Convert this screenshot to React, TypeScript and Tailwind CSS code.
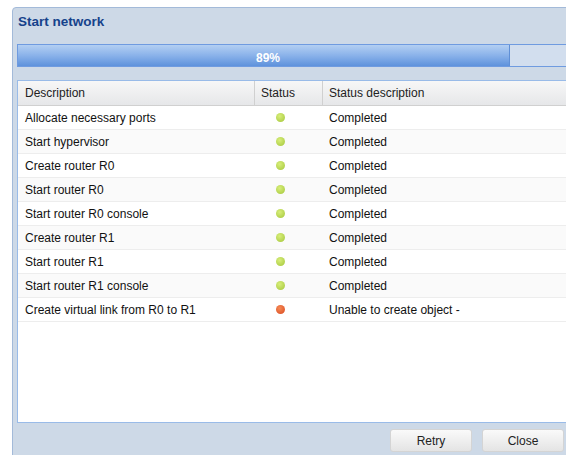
import React from "react";

type Step = { name: string; ok: boolean; status: string };

const steps: Step[] = [
  { name: "Allocate necessary ports", ok: true, status: "Completed" },
  { name: "Start hypervisor", ok: true, status: "Completed" },
  { name: "Create router R0", ok: true, status: "Completed" },
  { name: "Start router R0", ok: true, status: "Completed" },
  { name: "Start router R0 console", ok: true, status: "Completed" },
  { name: "Create router R1", ok: true, status: "Completed" },
  { name: "Start router R1", ok: true, status: "Completed" },
  { name: "Start router R1 console", ok: true, status: "Completed" },
  { name: "Create virtual link from R0 to R1", ok: false, status: "Unable to create object -" },
];

const font = { fontFamily: '"Liberation Sans", Arial, sans-serif' };

function Button({ label }: { label: string }) {
  return (
    <button className="w-[82px] h-[23px] rounded-[3px] border border-[#d4d4d4] bg-gradient-to-b from-[#fafafa] to-[#e4e4e4] text-[12px] text-[#222]">
      {label}
    </button>
  );
}

export default function App() {
  const progress = 89;

  return (
    <div className="w-[566px] h-[455px] bg-white overflow-hidden pl-[12px] pt-[7px]" style={font}>
      <div className="w-[562px] h-[460px] rounded-tl-[4px] border border-[#a3bad9] bg-[#cdd9e7] pl-[4px] pr-[4px] flex flex-col">
        <div className="h-[29px] flex items-center pl-[1px] text-[13.5px] font-bold text-[#15428b]">Start network</div>

        {/* progress bar */}
        <div className="mt-[7px] h-[23px] border border-[#6f9be0] bg-[#d2deee] flex">
          <div
            className="h-full bg-gradient-to-b from-[#b3cff2] via-[#8ab2ea] to-[#5e92dc] border-r border-[#5f8fd6]"
            style={{ width: "492px" }}
          />
          <span className="absolute left-[256px] top-[49px] text-[12px] font-bold text-white">{progress}%</span>
        </div>

        {/* steps grid */}
        <div className="mt-[13px] h-[343px] border border-[#99bbe8] bg-white flex flex-col">
          <div className="h-[25px] flex items-stretch bg-gradient-to-b from-[#f7f7f7] to-[#e6e7e9] border-b border-[#d0d0d0] text-[12px] text-[#222]">
            <div className="w-[237px] pl-[7px] flex items-center border-r border-[#d0d0d0]">Description</div>
            <div className="w-[68px] pl-[6px] flex items-center border-r border-[#d0d0d0]">Status</div>
            <div className="flex-1 pl-[6px] flex items-center">Status description</div>
          </div>
          {steps.map((s, i) => (
            <div
              key={s.name}
              className={`h-[24px] flex items-center border-b border-[#ededed] text-[12px] text-[#111] ${i % 2 === 1 ? "bg-[#fafafa]" : "bg-white"}`}
            >
              <div className="w-[237px] pl-[7px]">{s.name}</div>
              <div className="w-[68px] pl-[21px] flex items-center">
                <span
                  className={`block w-[9px] h-[9px] rounded-full ${s.ok ? "bg-[radial-gradient(circle_at_40%_35%,#d8ee7a,#a3c63a)]" : "bg-[radial-gradient(circle_at_40%_35%,#f58a55,#d9481f)]"}`}
                />
              </div>
              <div className="flex-1 pl-[6px]">{s.status}</div>
            </div>
          ))}
        </div>

        <div className="mt-[6px] flex justify-end gap-[10px] pr-[5px]">
          <Button label="Retry" />
          <Button label="Close" />
        </div>
      </div>
    </div>
  );
}
